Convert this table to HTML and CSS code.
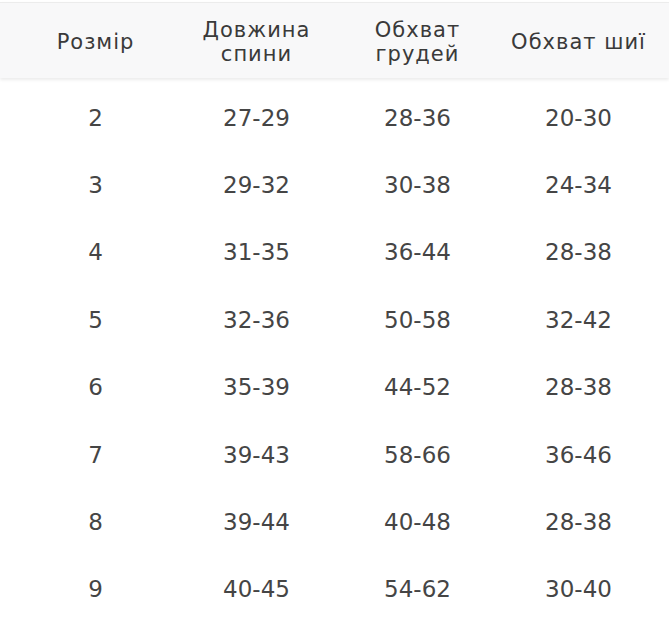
FILE: index.html
```html
<!DOCTYPE html>
<html lang="uk">
<head>
<meta charset="utf-8">
<link rel="stylesheet" href="styles.css">
</head>
<body>
<div class="table">
  <div class="head">
    <div class="row">
      <div class="cell">Розмір</div>
      <div class="cell">Довжина<br>спини</div>
      <div class="cell">Обхват<br>грудей</div>
      <div class="cell">Обхват шиї</div>
    </div>
  </div>
  <div class="body">
    <div class="row"><div class="cell">2</div><div class="cell">27-29</div><div class="cell">28-36</div><div class="cell">20-30</div></div>
    <div class="row"><div class="cell">3</div><div class="cell">29-32</div><div class="cell">30-38</div><div class="cell">24-34</div></div>
    <div class="row"><div class="cell">4</div><div class="cell">31-35</div><div class="cell">36-44</div><div class="cell">28-38</div></div>
    <div class="row"><div class="cell">5</div><div class="cell">32-36</div><div class="cell">50-58</div><div class="cell">32-42</div></div>
    <div class="row"><div class="cell">6</div><div class="cell">35-39</div><div class="cell">44-52</div><div class="cell">28-38</div></div>
    <div class="row"><div class="cell">7</div><div class="cell">39-43</div><div class="cell">58-66</div><div class="cell">36-46</div></div>
    <div class="row"><div class="cell">8</div><div class="cell">39-44</div><div class="cell">40-48</div><div class="cell">28-38</div></div>
    <div class="row"><div class="cell">9</div><div class="cell">40-45</div><div class="cell">54-62</div><div class="cell">30-40</div></div>
  </div>
</div>
</body>
</html>
```
FILE: styles.css
```css
html, body {
  margin: 0;
  padding: 0;
  background: #ffffff;
}
body {
  font-family: "DejaVu Sans", "Open Sans", sans-serif;
  color: #3a3a3a;
  overflow: hidden;
}
.table {
  padding-top: 2px;
}
.head {
  background: #f8f8f9;
  border-top: 1px solid #ececec;
  height: 75px;
  box-shadow: 0 2px 3px rgba(0, 0, 0, 0.08);
  display: flex;
  align-items: center;
  position: relative;
}
.row {
  display: grid;
  grid-template-columns: repeat(4, 161px);
  padding-left: 15px;
  align-items: center;
}
.head .cell {
  font-size: 21px;
  line-height: 24px;
  letter-spacing: 1px;
  text-align: center;
  color: #3a3a3a;
  padding-top: 2px;
}
.body {
  padding-top: 6px;
}
.body .row {
  height: 67.4px;
}
.body .cell {
  font-size: 23px;
  text-align: center;
  color: #454545;
}
```
